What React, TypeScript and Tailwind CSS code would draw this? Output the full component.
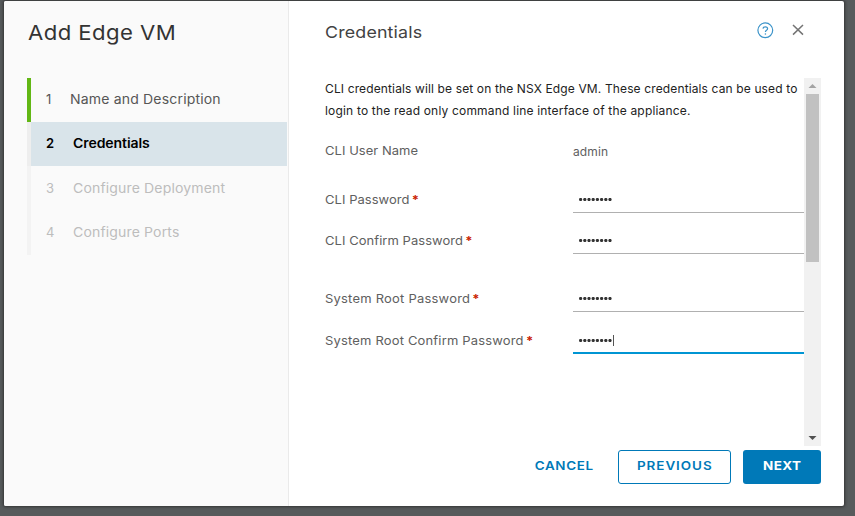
import React from "react";

type Step = { n: number; label: string; state: "done" | "active" | "todo"; text: string };

const steps: Step[] = [
  { n: 1, label: "Name and Description", state: "done", text: "tracking-[0.15px]" },
  { n: 2, label: "Credentials", state: "active", text: "tracking-[-0.08px]" },
  { n: 3, label: "Configure Deployment", state: "todo", text: "tracking-[0.13px]" },
  { n: 4, label: "Configure Ports", state: "todo", text: "tracking-[0.13px]" },
];

const rowStyle = {
  done: "border-[#62b715] text-[#565656]",
  active: "border-[#eeeeee] bg-[#d9e4ea] bg-clip-padding font-semibold text-black",
  todo: "border-[#f3f3f3] pt-px text-[#bdbdbd]",
};

// Stretches text horizontally for the wide letterforms of the interface.
const wide = "inline-block origin-left scale-x-[1.08] whitespace-nowrap";

function Field({
  label,
  top,
  text,
  focused = false,
}: {
  label: string;
  top: string;
  text: string;
  focused?: boolean;
}) {
  return (
    <div className={`flex h-[27px] ${top}`}>
      <div className="w-[248px] leading-[27px] text-[#606060]">
        <span className={`${wide} ${text}`}>
          {label}
          <span className="ml-[2px] font-bold text-[#c92100]">*</span>
        </span>
      </div>
      <div
        className={`flex flex-1 items-center pl-[6px] ${
          focused ? "border-b-2 border-[#0095d3]" : "border-b border-[#b0b0b0]"
        }`}
      >
        <svg className="mt-px h-[3px] w-[33.5px]" viewBox="0 0 33.5 3" fill="#333">
          {Array.from({ length: 8 }, (_, i) => (
            <circle key={i} cx={1.6 + i * 4.2} cy="1.5" r="1.6" />
          ))}
        </svg>
        {focused && <span className="mt-px h-[11px] w-px bg-[#555]" />}
      </div>
    </div>
  );
}

export default function App() {
  return (
    <div className="h-[516px] w-[855px] overflow-hidden bg-[#575b5c] pl-[4px] pt-[1px] font-['Inter',sans-serif] text-[12px]">
      <div className="flex h-[505px] w-[840px] overflow-hidden rounded-[2px] bg-white shadow-[0_0_3px_1px_#333]">
        <aside className="w-[285px] shrink-0 border-r border-[#eaeaea] bg-[#fafafa] pl-[23px] pt-[18px]">
          <h1 className="h-[59px] pl-px text-[20.5px] leading-[27px] text-[#333]">
            <span className={`${wide} tracking-[0.4px]`}>Add Edge VM</span>
          </h1>
          <nav>
            {steps.map((s) => (
              <div
                key={s.n}
                className={`flex h-[44.2px] w-[260px] items-center border-l-4 pl-[15px] text-[13px] ${
                  s.state === "todo" ? "" : "pb-px"
                } ${rowStyle[s.state]}`}
              >
                <span className={s.n === 1 ? "w-[24px]" : "w-[27px]"}>{s.n}</span>
                <span className={`${wide} ${s.text}`}>{s.label}</span>
              </div>
            ))}
          </nav>
        </aside>
        <main className="flex flex-1 flex-col pl-[36px] pr-[24px]">
          <header className="flex h-[77px] pt-[18px]">
            <h2 className="flex-1 text-[16.5px] leading-[27px] text-[#424242]">
              <span className={`${wide} tracking-[0.15px]`}>Credentials</span>
            </h2>
            <svg className="mt-[3px] size-[17px]" viewBox="0 0 17 17" fill="none" stroke="#3b93c9">
              <circle cx="8.3" cy="8.3" r="7.4" strokeWidth="1.2" />
              <path d="M6 6.6C6.2 4.2 10.6 4.2 10.6 6.7C10.6 8.3 8.4 8.3 8.4 10" strokeWidth="1.2" />
              <circle cx="8.4" cy="12" r=".8" fill="#3b93c9" stroke="none" />
            </svg>
            <svg className="ml-[18px] mr-[17px] mt-[5px] size-[12px]" viewBox="0 0 12 12" stroke="#747474" strokeWidth="1.5">
              <path d="M1 1L11 10.6M11 1L1 10.6" />
            </svg>
          </header>
          <div className="flex h-[368px]">
            <div className="w-[479px] shrink-0">
              <p className="whitespace-nowrap leading-[22px] text-[#222]">
                <span className="tracking-[0.13px]">
                  CLI credentials will be set on the NSX Edge VM. These credentials can be used to
                </span>
                <br />
                <span className="tracking-[0.18px]">
                  login to the read only command line interface of the appliance.
                </span>
              </p>
              <div className="mt-[15px] flex h-[27px] leading-[27px] text-[#606060]">
                <div className="w-[248px]">
                  <span className={`${wide} tracking-[0.05px]`}>CLI User Name</span>
                </div>
                <span className="pt-px tracking-[0.1px]">admin</span>
              </div>
              <Field label="CLI Password" top="mt-[22px]" text="tracking-[0.05px]" />
              <Field label="CLI Confirm Password" top="mt-[14px]" text="tracking-[0.06px]" />
              <Field label="System Root Password" top="mt-[31px]" text="tracking-[0.21px]" />
              <Field label="System Root Confirm Password" top="mt-[15px]" text="tracking-[0.17px]" focused />
            </div>
            <div className="flex w-[17px] shrink-0 flex-col items-center bg-[#f1f1f1]">
              <svg className="h-[16px] w-[17px] shrink-0" viewBox="0 0 17 16">
                <path d="M4.5 10L8.5 6L12.5 10Z" fill="#a3a3a3" />
              </svg>
              <div className="h-[168px] w-[13px] bg-[#c1c1c1]" />
              <div className="flex-1" />
              <svg className="h-[17px] w-[17px] shrink-0" viewBox="0 0 17 17">
                <path d="M4.5 7L8.5 11L12.5 7Z" fill="#505050" />
              </svg>
            </div>
          </div>
          <footer className="flex justify-end pt-[4px] text-[12px] font-semibold text-[#0079b8]">
            <button className="mr-[24px] h-[34px] pb-[2px]">
              <span className="inline-block origin-right scale-x-[1.12] tracking-[0.6px]">CANCEL</span>
            </button>
            <button className="mr-[12px] h-[34px] w-[113px] rounded-[3px] border border-[#0079b8] pb-[2px]">
              <span className="inline-block scale-x-[1.12] tracking-[0.85px]">PREVIOUS</span>
            </button>
            <button className="h-[34px] w-[78px] rounded-[3px] bg-[#0079b8] pb-[2px] font-bold text-white">
              <span className="inline-block scale-x-[1.12] tracking-[0.4px]">NEXT</span>
            </button>
          </footer>
        </main>
      </div>
    </div>
  );
}
